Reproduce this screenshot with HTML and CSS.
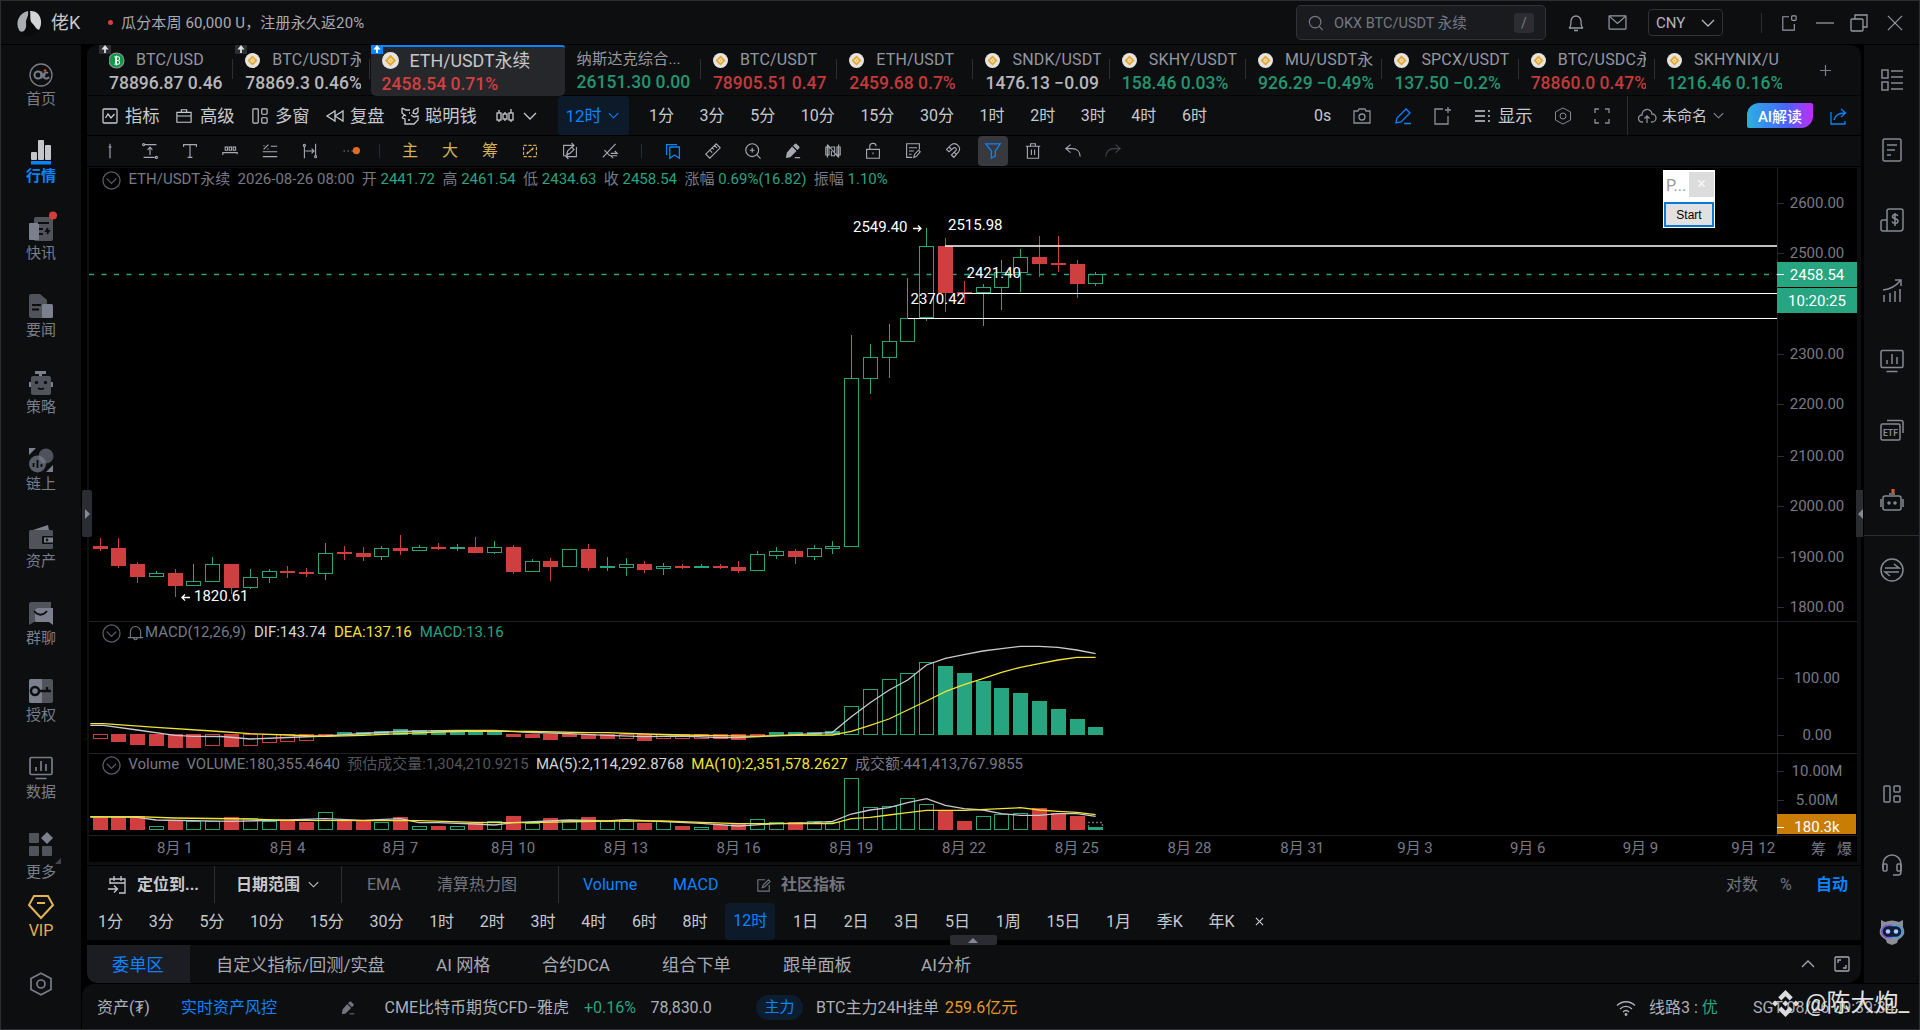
FILE: index.html
```html
<!DOCTYPE html>
<html lang="zh-CN">
<head>
  <meta charset="UTF-8">
  <title>ETH/USDT永续</title>
  <link rel="stylesheet" href="styles.css">
</head>
<body>
  <svg class="sprite" xmlns="http://www.w3.org/2000/svg">
    <symbol id="down" viewBox="0 0 14 8"><path d="M1 1l6 6 6-6"/></symbol>
    <symbol id="fold" viewBox="0 0 20 20"><circle cx="10" cy="10" r="9"/><path d="M5 8l5 5 5-5"/></symbol>
    <symbol id="bell" viewBox="0 0 20 20"><path d="M1 16h18M4 16V9a6 6 0 0 1 12 0v7M8 16.5a2 2 0 0 0 4 0"/></symbol>
    <symbol id="layout" viewBox="0 0 18 18"><rect x="1" y="1" width="6" height="16" rx="1"/><rect x="11" y="1" width="6" height="6" rx="1"/><rect x="11" y="11" width="6" height="6" rx="1"/></symbol>
    <symbol id="pen" viewBox="0 0 18 18"><path d="M2 16l1-5 9-9 4 4-9 9zM10 16.5h7"/></symbol>
    <symbol id="hex" viewBox="0 0 24 24"><path d="M12 1.2l10 5.4v10.8l-10 5.4-10-5.4V6.600z"/><circle cx="12" cy="12" r="4"/></symbol>
    <symbol id="coin" viewBox="0 0 18 18"><circle class="coin-bg" cx="9" cy="9" r="9"/><path class="coin-mark" d="M9 3l6 6-6 6-6-6zM9 6L6 9l3 3 3-3zM9 7.700l1.300 1.300L9 10.300 7.700 9z"/></symbol>
    <symbol id="pin" viewBox="0 0 12 10"><path d="M6 0l4 5H7v4H5V5H2z"/></symbol>
    <symbol id="marker" viewBox="0 0 18 18"><path class="solid" d="M1 17l1-6 6-7 5 5-7 7zM9 3l2-2q1-1 2 0l3 3q1 1 0 2l-2 2z"/><path d="M11 16.500h6"/></symbol>
    <symbol id="monitor" viewBox="0 0 24 24"><rect x="1" y="1.500" width="22" height="17" rx="1.500"/><path d="M7 15v-4M12 15V5M17 15V8M6.500 22.500h11"/></symbol>
  </svg>

  <header class="titlebar">
    <svg class="avatar" viewBox="0 0 26 26"><circle cx="13" cy="13" r="12.500" fill="#0a0a0a"/><path d="M3 20C-1 12 3 3 12 1c1 5-2 8-2 11 0 4 1 5-2 9-2 1-4 1-5-1z" fill="#a9acb0"/><path d="M14 1c10-1 14 11 9 19-3-1-4-4-6-6-4-3-2-8-3-13z" fill="#d2d4d6"/></svg>
    <span class="user">佬K</span>
    <span class="dot"></span>
    <span class="notice">瓜分本周 60,000 U，注册永久返20%</span>
    <div class="search">
      <svg class="i16" viewBox="0 0 18 18"><circle cx="8" cy="8" r="6.500"/><path d="M12.500 12.500l4 4.500"/></svg>
      <span>OKX BTC/USDT 永续</span>
      <kbd>/</kbd>
    </div>
    <svg class="bell" viewBox="0 0 18 18"><path d="M2 14c2-1 2-3 2-7a5 5 0 0 1 10 0c0 4 0 6 2 7zM7 16.500h4"/></svg>
    <svg class="mail" viewBox="0 0 20 16"><rect x="1" y="1" width="18" height="14" rx=".5"/><path d="M1.500 1.500L10 9l8.500-7.500"/></svg>
    <div class="currency">CNY <svg class="chev"><use href="#down"/></svg></div>
    <span class="win-sep"></span>
    <svg class="i16" viewBox="0 0 18 18"><path d="M9 2H2v15h13v-7"/><rect x="12" y="1" width="5" height="5" rx="1"/></svg>
    <svg class="i18" viewBox="0 0 18 18"><path d="M0 9h18"/></svg>
    <svg class="i18" viewBox="0 0 18 18"><rect x="1" y="5" width="12" height="12" rx="1"/><path d="M5 5V1h12v12h-4"/></svg>
    <svg class="i16" viewBox="0 0 18 18"><path d="M1 1l16 16M17 1L1 17"/></svg>
  </header>

  <div class="content">
    <nav class="sidebar">
      <a class="item home"><svg viewBox="0 0 24 24"><circle cx="12" cy="12" r="11"/><circle cx="9" cy="12" r="3.500" stroke-width="2"/><path d="M12.500 8.500v7M20 14a3 3 0 1 1-1-4M15.500 10v3" stroke-width="2"/><circle cx="16" cy="7.500" r="1.300" fill="#e0531f" stroke="none"/></svg>首页</a>
      <a class="item active"><svg viewBox="0 0 24 24"><g stroke="none" fill="#c4c6ca"><rect x="2" y="12" width="6" height="8" rx="1"/><rect x="9" y="0" width="6" height="20" rx="1"/><rect x="16" y="5" width="6" height="15" rx="1"/><rect x="2" y="21" width="20" height="3.500" fill="#0a84ff"/></g></svg>行情</a>
      <a class="item"><svg viewBox="0 0 24 24"><g stroke="none"><rect class="d" x="5" y="0" width="19" height="24" rx="2"/><rect class="l" x="0" y="6" width="10" height="17" rx="1"/></g><path class="k" d="M9 6h11M10 12h4M10 17h4M19 11l-2 3h3l-2 3"/><circle cx="24" cy="-1.500" r="4" fill="#d63c3c" stroke="none"/></svg>快讯</a>
      <a class="item"><svg viewBox="0 0 24 24"><g stroke="none"><path class="d" d="M2 0h9l7 6v18H2a2 2 0 0 1-2-2V2a2 2 0 0 1 2-2z"/><rect class="l" x="13" y="10" width="11" height="14" rx="1.500"/></g><path class="k" d="M3 11h9M3 15.500h7"/></svg>要闻</a>
      <a class="item"><svg viewBox="0 0 24 24"><g stroke="none"><path class="l" d="M6 0h11v3h-4v3h-3V3H6zM0 11h24v5H0z"/><rect class="d" x="2" y="5" width="20" height="19" rx="2"/></g><g fill="#0d0e10" stroke="none"><circle cx="7.500" cy="11.500" r="1.700"/><circle cx="16.500" cy="11.500" r="1.700"/></g><path class="k" d="M9 17c2 1.500 4 1.500 6 0"/></svg>策略</a>
      <a class="item"><svg viewBox="0 0 24 24"><g stroke="none"><circle class="l" cx="17" cy="8" r="7.500" opacity=".6"/><circle class="l" cx="8.500" cy="16" r="8.500" opacity=".7"/><path class="l" d="M0 0h7L0 7zM24 17v7h-7z"/></g><path class="k" d="M4.500 19v-4M8.500 20v-8M12.500 19v-3"/></svg>链上</a>
      <a class="item"><svg viewBox="0 0 24 24"><g stroke="none"><path class="l" d="M4 5l15-5 1 5z"/><rect class="d" x="0" y="5" width="24" height="19" rx="1.500"/><rect x="13" y="11" width="11" height="8" rx="1" fill="#0d0e10"/><rect class="l" x="15" y="12.500" width="9" height="5"/></g><circle class="k" cx="18" cy="15" r=".5"/></svg>资产</a>
      <a class="item"><svg viewBox="0 0 24 24"><g stroke="none"><path class="d" d="M2 0h20v20H5l-5 3V2a2 2 0 0 1 2-2z"/><path class="l" d="M8 6h16v17l-4-3H8a2 2 0 0 1-2-2V8z"/></g><path class="k" d="M5 9c4 5 9 5 13 0"/></svg>群聊</a>
      <a class="item"><svg viewBox="0 0 24 24"><g stroke="none"><rect class="d" width="24" height="24" rx="2"/><path class="l" d="M2 0h11v24H2a2 2 0 0 1-2-2V2a2 2 0 0 1 2-2z"/></g><g stroke="#0d0e10" stroke-width="2.500"><circle cx="6" cy="12" r="4"/><path d="M10 12h12M18 12V8"/></g></svg>授权</a>
      <a class="item"><svg class="thick"><use href="#monitor"/></svg>数据</a>
      <a class="item more"><svg viewBox="0 0 24 24"><g stroke="none" class="d"><rect width="10" height="10" rx="1"/><rect y="13" width="10" height="10" rx="1"/><rect x="13" y="13" width="10" height="10" rx="1"/><path class="l" d="M18 -1l6 6-6 6-6-6z"/></g></svg>更多</a>
      <a class="item vip"><svg viewBox="0 0 26 24"><path d="M6 1h14l5 9-12 13L1 10zM9 8h8" stroke-width="2"/></svg>VIP</a>
      <a class="item gear"><svg class="thick"><use href="#hex"/></svg></a>
    </nav>

    <div class="workspace">
      <div class="upper">
        <main class="main">
          <div class="handle left"></div>
          <div class="tabs">
            <div class="tab gray pinned"><svg class="pin"><use href="#pin"/></svg><div class="name"><svg class="coin" viewBox="0 0 18 18"><circle cx="9" cy="9" r="9" fill="#0c9a45"/><path d="M6.500 4.500h4a2 2 0 0 1 0 4.500 2.200 2.200 0 0 1 0 4.500h-4M8 4.500v9M8 9h3M9 3v12" stroke="#fff"/></svg>BTC/USD</div><div class="quote">78896.87 0.46</div></div>
            <div class="tab gray pinned"><svg class="pin"><use href="#pin"/></svg><div class="name"><svg class="coin"><use href="#coin"/></svg>BTC/USDT永续</div><div class="quote">78869.3 0.46%</div></div>
            <div class="tab red current"><svg class="pin"><use href="#pin"/></svg><div class="name"><svg class="coin"><use href="#coin"/></svg>ETH/USDT永续</div><div class="quote">2458.54 0.71%</div></div>
            <div class="tab green index"><div class="name">纳斯达克综合...</div><div class="quote">26151.30 0.00</div></div>
            <div class="tab red"><div class="name"><svg class="coin"><use href="#coin"/></svg>BTC/USDT</div><div class="quote">78905.51 0.47</div></div>
            <div class="tab red"><div class="name"><svg class="coin"><use href="#coin"/></svg>ETH/USDT</div><div class="quote">2459.68 0.7%</div></div>
            <div class="tab gray"><div class="name"><svg class="coin"><use href="#coin"/></svg>SNDK/USDT</div><div class="quote">1476.13 −0.09</div></div>
            <div class="tab green"><div class="name"><svg class="coin"><use href="#coin"/></svg>SKHY/USDT</div><div class="quote">158.46 0.03%</div></div>
            <div class="tab green"><div class="name"><svg class="coin"><use href="#coin"/></svg>MU/USDT永续</div><div class="quote">926.29 −0.49%</div></div>
            <div class="tab green"><div class="name"><svg class="coin"><use href="#coin"/></svg>SPCX/USDT</div><div class="quote">137.50 −0.2%</div></div>
            <div class="tab red"><div class="name"><svg class="coin"><use href="#coin"/></svg>BTC/USDC永续</div><div class="quote">78860.0 0.47%</div></div>
            <div class="tab green last"><div class="name"><svg class="coin"><use href="#coin"/></svg>SKHYNIX/U</div><div class="quote">1216.46 0.16%</div></div>
            <svg class="add" viewBox="0 0 14 14"><path d="M7 1v12M1 7h12"/></svg>
          </div>

          <div class="toolbar">
            <svg class="i16" viewBox="0 0 16 16"><rect x="1" y="1" width="14" height="14" rx="1"/><path d="M3.500 10l2.500-4 3 4 3.500-4"/></svg><b>指标</b>
            <svg class="i16" viewBox="0 0 18 16"><path d="M1 4h16v11H1zM1 8h16M6 4V1h6v3"/></svg><b>高级</b>
            <svg class="i16"><use href="#layout"/></svg><b>多窗</b>
            <svg class="i18" viewBox="0 0 18 18"><path d="M9 4v10L1 9zM17 4v10L9 9z"/></svg><b>复盘</b>
            <svg class="i18" viewBox="0 0 18 18"><path d="M1 1v5l4 3M1 1l4 2h4M17 1l-4 2-1 3 3 1 2-2zM1 11l3 1v5h9l4-4V9l-4 1-3-2M3 8l-2 3M7 13h2M8 6h1"/></svg><b>聪明钱</b>
            <svg class="i18" viewBox="0 0 18 18"><path d="M3 3v12M9 5v9M15 2v13"/><g fill="#0d0e10"><rect x="1" y="6" width="4" height="7"/><rect x="7" y="7" width="4" height="5"/><rect x="13" y="6" width="4" height="7"/></g></svg>
            <svg class="chev"><use href="#down"/></svg>
            <div class="period-now">12时 <svg><use href="#down"/></svg></div>
            <div class="periods">
              <span>1分</span><span>3分</span><span>5分</span><span>10分</span><span>15分</span><span>30分</span><span>1时</span><span>2时</span><span>3时</span><span>4时</span><span>6时</span>
            </div>
            <span>0s</span>
            <svg class="i18 dim" viewBox="0 0 18 18"><path d="M1 4h4l1-2h6l1 2h4v12H1z"/><circle cx="9" cy="10" r="3"/></svg>
            <svg class="i18 blue"><use href="#pen"/></svg>
            <svg class="i18 dim" viewBox="0 0 18 18"><path d="M9 2H1v15h13V9M14 0v6M11 3h6"/></svg>
            <svg class="i16" viewBox="0 0 16 16"><path d="M0 3h10M0 8h10M0 13h10M13 3h2M13 8h2M13 13h2"/></svg><b>显示</b>
            <svg class="i18 dim"><use href="#hex"/></svg>
            <svg class="i16 dim" viewBox="0 0 16 16"><path d="M1 5V1h4M11 1h4v4M15 11v4h-4M5 15H1v-4"/></svg>
            <span class="vline"></span>
            <svg class="i18 dim" viewBox="0 0 18 16"><path d="M5 14H4a3.500 3.500 0 0 1 0-7 5 5 0 0 1 10-1 4 4 0 0 1 0 8h-1M9 15V8M6.500 10.500L9 8l2.500 2.500"/></svg>
            <span class="draft">未命名</span>
            <svg class="chev small dim"><use href="#down"/></svg>
            <button class="ai-btn">AI解读</button>
            <svg class="i18 blue" viewBox="0 0 18 18"><path d="M2 5v12h14v-3M5 13c1-5 4-7 11-7M12 2l4.500 4L12 10"/></svg>
          </div>

          <div class="tools">
            <i><svg viewBox="0 0 20 20"><path d="M10 1v18M8 5h4"/></svg></i>
            <i><svg viewBox="0 0 20 20"><path d="M3 2h15M2 18h14M10 15V6M7 8.500L10 5l3 3.500"/><circle cx="2" cy="2" r="1.300"/><circle cx="18" cy="18" r="1.300"/></svg></i>
            <i><svg viewBox="0 0 20 20"><path d="M2 5V2h16v3M10 2v16M7 18h6"/></svg></i>
            <i><svg viewBox="0 0 20 20"><path d="M1 15v-3h18v2"/><rect x="4" y="5" width="3" height="4"/><rect x="9" y="5" width="3" height="4"/><rect x="14" y="5" width="3" height="4"/></svg></i>
            <i><svg viewBox="0 0 20 20"><path d="M1 17h18M1 11h18M11 4h8M2 8l6-6M2 3l1 1M7 7l1 1"/></svg></i>
            <i><svg viewBox="0 0 20 20"><path d="M3 4v15M17 1v15M4 10h11M12 7l3 3-3 3"/><circle cx="3" cy="3" r="1.300"/><circle cx="17" cy="17" r="1.300"/></svg></i>
            <i><svg viewBox="0 0 20 20"><path d="M2 10h1.500M7 10h1.500M12 10h1.500"/><circle cx="18" cy="9.500" r="4.500" fill="#e06c1f" stroke="none"/></svg></i>
            <hr>
            <i class="gold">主</i>
            <i class="gold">大</i>
            <i class="gold">筹</i>
            <i class="gold"><svg viewBox="0 0 20 20"><rect x="2" y="3" width="16" height="14" stroke-dasharray="4 2"/><path d="M6 14l8-8M6 14l1-3M14 6l-1 3"/></svg></i>
            <i><svg viewBox="0 0 20 20"><path d="M2 7V3h12M12 0l3 3-3 3M2 7v9h3M18 5v12H6M8 14l-3 3 3 3M6 14l1-4 5-5 3 3-5 5z"/></svg></i>
            <i><svg viewBox="0 0 20 20"><path d="M1 18L17 1M3 9l7 7M11 13h8l-3-3M19 16h-8l3 3"/></svg></i>
            <hr class="wide">
            <i class="blue"><svg viewBox="0 0 20 20"><path d="M6 5h12v14l-6-4-6 4zM2 15V2h13" stroke-width="1.600"/></svg></i>
            <i><svg viewBox="0 0 20 20"><path d="M1 14L14 1l5 5L6 19zM6 9l3 3M9 6l2 2M12 3l3 3"/></svg></i>
            <i><svg viewBox="0 0 20 20"><circle cx="9" cy="9" r="8"/><path d="M14.500 14.500l5 5M9 6v6M6 9h6"/></svg></i>
            <i><svg><use href="#marker"/></svg></i>
            <i><svg viewBox="0 0 20 20"><path d="M3 2v16M17 2v16M1 5h4v10H1zM15 5h4v10h-4zM3 2l14 16M8 10v6h4v-2M8 6V5h4v6"/></svg></i>
            <i><svg viewBox="0 0 20 20"><path d="M2 8h16v11H2zM6 8V5a4 4 0 0 1 8-1M10 12v2"/></svg></i>
            <i><svg viewBox="0 0 20 20"><path d="M18 8V1H2v17h7M5 6h10M5 10h6M5 14h3M11 18l1-4 5-5 2 2-5 6z"/></svg></i>
            <i><svg viewBox="0 0 20 20"><path d="M2 8l6-6a6.500 6.500 0 0 1 9 9l-6 7-3-3 6-6a2.300 2.300 0 0 0-3-3l-6 5zM5 5l3 3M11 11l3 3"/></svg></i>
            <i class="on blue"><svg viewBox="0 0 20 20"><path d="M1 1h18l-6 9v6l-5 3v-9z" stroke-width="1.600"/></svg></i>
            <i><svg viewBox="0 0 20 20"><path d="M1 4h18M3 4v15h14V4M7 4V1h6v3M8 8v7M12 8v7"/></svg></i>
            <i><svg viewBox="0 0 20 20"><path d="M7 2L1 7l6 5M1 7h8c6 0 10 4 10 10"/></svg></i>
            <i class="off"><svg viewBox="0 0 20 20"><path d="M13 2l6 5-6 5M19 7h-8C5 7 1 11 1 17"/></svg></i>
          </div>

          <div class="chart">
            <svg id="chart" viewBox="89 168 1768 694"></svg>
            <div class="legend price">
              <svg class="fold"><use href="#fold"/></svg><span>ETH/USDT永续</span>
              <span>2026-08-26 08:00</span>
              <span>开 <em>2441.72</em></span><span>高 <em>2461.54</em></span><span>低 <em>2434.63</em></span><span>收 <em>2458.54</em></span><span>涨幅 <em>0.69%(16.82)</em></span><span>振幅 <em>1.10%</em></span>
            </div>
            <div class="legend macd">
              <svg class="fold"><use href="#fold"/></svg>
              <span class="with-bell"><svg><use href="#bell"/></svg>MACD(12,26,9)</span>
              <span class="white">DIF:143.74</span><span class="yellow">DEA:137.16</span><em>MACD:13.16</em>
            </div>
            <div class="legend volume">
              <svg class="fold"><use href="#fold"/></svg><span>Volume</span>
              <span>VOLUME:180,355.4640</span><span class="dark">预估成交量:1,304,210.9215</span><span class="white">MA(5):2,114,292.8768</span><span class="yellow">MA(10):2,351,578.2627</span><span>成交额:441,413,767.9855</span>
            </div>
            <div class="popup">
              <div class="popup-head"><span>P...</span><b>×</b></div>
              <button>Start</button>
            </div>
          </div>

          <div class="indicator-bar">
            <svg class="cal" viewBox="0 0 20 20"><path d="M3 9V4h15v14h-6M3 8h15M7 1v5M14 1v5M1 14h9M7 10.500l3.500 3.500L7 17.500"/></svg><b>定位到...</b><span class="vline"></span>
            <b>日期范围</b><svg class="chev small"><use href="#down"/></svg><span class="vline"></span>
            <span class="mute">EMA</span><span class="mute">清算热力图</span><span class="vline"></span>
            <span class="blue">Volume</span><span class="blue">MACD</span>
            <svg class="i14 mute" viewBox="0 0 16 16"><path d="M9 2H1v13h13V8M6 11l1-3 6-6 2 2-6 6z"/></svg><b class="mute">社区指标</b>
            <span class="mute">对数</span><span class="mute">%</span><b class="blue">自动</b>
          </div>
          <div class="period-bar">
            <span>1分</span><span>3分</span><span>5分</span><span>10分</span><span>15分</span><span>30分</span><span>1时</span><span>2时</span><span>3时</span><span>4时</span><span>6时</span><span>8时</span><span class="picked">12时</span><span>1日</span><span>2日</span><span>3日</span><span>5日</span><span>1周</span><span>15日</span><span>1月</span><span>季K</span><span>年K</span>
            <svg viewBox="0 0 10 10"><path d="M1 1l8 8M9 1L1 9"/></svg>
            <div class="handle bottom"></div>
          </div>
          <div class="panel-tabs">
            <span class="picked">委单区</span><span>自定义指标/回测/实盘</span><span>AI 网格</span><span>合约DCA</span><span>组合下单</span><span>跟单面板</span><span>AI分析</span>
            <svg class="chev up"><use href="#down"/></svg>
            <svg class="i16" viewBox="0 0 16 16"><rect x="1" y="1" width="14" height="14" rx="1"/><path d="M4 7V4h3M12 9v3H9"/></svg>
          </div>
          <div class="handle right"></div>
        </main>

        <aside class="rail">
          <svg viewBox="0 0 24 24"><rect x="2" y="2" width="6" height="8"/><rect x="2" y="14" width="6" height="8"/><path d="M11 3h12M11 9h12M11 15h12M11 21h12"/></svg>
          <svg viewBox="0 0 24 24"><rect x="3" y="1" width="18" height="22" rx="1.500"/><path d="M7 7h10M7 12h8M7 17h4"/></svg>
          <svg viewBox="0 0 24 24"><path d="M3 23h17a3 3 0 0 0 3-3V3a2 2 0 0 0-2-2H9a2 2 0 0 0-2 2v20H3a2 2 0 0 1-2-2v-7a2 2 0 0 1 2-2h4"/><path d="M18 8c-1-2-5-2-5.500 0-.5 3.500 5.500 2 5.500 5 0 3-5 3-6 .500M15 5v13"/></svg>
          <svg viewBox="0 0 24 24"><path d="M3 11c8-1 13-4 17-9M15 1h6v6M4 16v7M10 14v9M15 12v11M20 10v13"/></svg>
          <svg><use href="#monitor"/></svg>
          <svg viewBox="0 0 24 24"><rect x="1" y="5" width="19" height="16" rx="1.500"/><path d="M7 1.500h14a2 2 0 0 1 2 2V14"/><text x="3" y="16.500">ETF</text></svg>
          <svg viewBox="0 0 24 24"><rect x="3" y="7" width="18" height="14" rx="2"/><path d="M1 10v8M23 10v8M9 5h6"/><g fill="currentColor"><circle cx="9" cy="14" r="1"/><circle cx="15" cy="14" r="1"/></g><path d="M13 0v4" stroke="#e05a2a" stroke-width="3"/></svg>
          <hr>
          <svg class="swap" viewBox="0 0 24 24"><circle cx="12" cy="12" r="11"/><path d="M5 10h14l-5-4M19 14H5l5 4"/></svg>
          <svg class="grid-icon"><use href="#layout"/></svg>
          <svg class="phone" viewBox="0 0 24 24"><path d="M3 16V11a9 9 0 0 1 18 0v8a3 3 0 0 1-3 3h-5"/><rect x="3" y="11" width="4" height="7" rx="1"/><rect x="17" y="11" width="4" height="7" rx="1"/></svg>
          <svg class="bot" viewBox="0 0 26 26" stroke="none"><path d="M2 1l4 2q7-3 14 0l4-2v7q3 6-1 10l-4 3-1 3-5 2-5-2-1-3-4-3q-4-4-1-10z" fill="#8d8f97"/><rect x="2.500" y="6" width="21" height="13" rx="6.500" fill="#151b36"/><path d="M13 6.500H9a6 6 0 0 0 0 12h4" stroke="#7a55e0" stroke-width="1.500"/><path d="M13 6.500h4a6 6 0 0 1 0 12h-4" stroke="#4da3e8" stroke-width="1.500"/><circle cx="9" cy="12.500" r="2.300" fill="#9fd0ff"/><circle cx="17" cy="12.500" r="2.300" fill="#9fd0ff"/></svg>
        </aside>
      </div>

      <footer class="status">
        <span>资产(₮)</span>
        <span class="blue">实时资产风控</span>
        <svg class="i14 mute"><use href="#marker"/></svg>
        <span>CME比特币期货CFD−雅虎</span>
        <span class="green">+0.16%</span>
        <span>78,830.0</span>
        <span class="pill">主力</span>
        <span>BTC主力24H挂单</span>
        <span class="orange">259.6亿元</span>
        <svg class="wifi" viewBox="0 0 20 16"><path d="M1 5.500c5-5 13-5 18 0M4 9c3.500-3.500 8.500-3.500 12 0M7 12c2-2 4-2 6 0"/><circle cx="10" cy="14.500" r=".8"/></svg>
        <span>线路3 : <em>优</em></span>
        <span class="clock">SGT 08/26 09:39:34</span>
        <div class="watermark">
          <svg viewBox="0 0 26 26"><path d="M13 0l7 7-3 3-4-4-4 4-3-3zM3 10l3 3-3 3-3-3zM23 10l3 3-3 3-3-3zM13 10l3 3-3 3-3-3zM6 19l3-3 4 4 4-4 3 3-7 7z"/></svg>
          @陈大炮_
        </div>
      </footer>
    </div>
  </div>
  <script src="chart.js"></script>
</body>
</html>
```
FILE: styles.css
```css
* {
  box-sizing: border-box;
}

body {
  margin: 0;
  width: 1920px;
  height: 1030px;
  overflow: hidden;
  border: 1px solid #2b2d31;
  background: #000;
  color: #c6c9ce;
  font-family: Roboto, "Noto Sans CJK SC", sans-serif;
  font-size: 16px;
  line-height: 20px;
  white-space: nowrap;
}

svg {
  display: block;
  fill: none;
  stroke: currentColor;
  stroke-width: 1.3;
  overflow: visible;
}

.sprite {
  position: absolute;
  width: 0;
  height: 0;
}

b {
  font-weight: 500;
}

em {
  font-style: normal;
  color: #27a581;
}

.i14 { width: 14px; height: 14px; }
.i16 { width: 16px; height: 16px; }
.i18 { width: 18px; height: 18px; }
.chev { width: 14px; height: 8px; }
.chev.small { width: 11px; height: 7px; }
.solid { fill: currentColor; stroke: none; }
.blue { color: #0a84ff; }
.green { color: #27a581; }
.orange { color: #e79a24; }
.mute { color: #72757f; }
.dim { color: #8b8e98; }

.coin-bg { fill: #e6e4e2; stroke: none; }
.coin-mark { fill: #e9a825; stroke: none; fill-rule: evenodd; }

.vline {
  align-self: stretch;
  width: 1px;
  background: #2c2e33;
}

/* title bar */
.titlebar {
  height: 44px;
  border-bottom: 1px solid #000;
  background: #0d0e10;
  display: grid;
  grid-template-columns: 35px 57px 13px 1175px 271px 41px 40px 113px 20px 35px 34px 37px 20px;
  padding-left: 15px;
  align-items: center;
  color: #9699a3;
}

.avatar { width: 26px; height: 26px; stroke: none; }
.user { font-size: 18px; color: #c6c9ce; }

.dot {
  width: 5px;
  height: 5px;
  border-radius: 50%;
  background: #d84040;
}

.notice { font-size: 15px; color: #a8abb3; letter-spacing: 0.15px; }

.search {
  width: 250px;
  height: 35px;
  border: 1px solid #303237;
  border-radius: 5px;
  background: #1a1b1f;
  display: grid;
  grid-template-columns: 26px 180px 20px;
  align-items: center;
  padding-left: 11px;
  font-size: 14.5px;
  color: #757883;
}

.search span { padding-top: 3px; }

kbd {
  height: 20px;
  border-radius: 3px;
  background: #2c2d32;
  text-align: center;
  font-family: inherit;
  font-size: 14px;
}

.bell { width: 18px; height: 18px; }
.mail { width: 19px; height: 15px; }

.currency {
  width: 75px;
  height: 27px;
  border: 1px solid #303237;
  border-radius: 4px;
  display: flex;
  align-items: center;
  justify-content: space-between;
  padding: 0 7px;
  font-size: 15px;
  color: #b4b7bd;
}

.win-sep { width: 1px; height: 20px; background: #2c2e33; }

.content {
  display: flex;
}

/* left navigation */
.sidebar {
  width: 80px;
  height: 984px;
  background: #0d0e10;
  padding-top: 18px;
}

.item {
  height: 77px;
  display: flex;
  flex-direction: column;
  align-items: center;
  font-size: 15px;
  color: #7a7d88;
  position: relative;
}

.item svg {
  width: 24px;
  height: 24px;
  margin-bottom: 2px;
}

.item .d { fill: #50535a; }
.item .l { fill: #7b7f8e; }
.item .k { stroke: #0d0e10; stroke-width: 1.8; }
.item.active { color: #0a84ff; font-weight: 700; }
.item.home { color: #7a7d88; }
.thick { stroke-width: 1.7; }
.more { height: 62px; }
.more svg { margin-bottom: 5px; }

.more::after {
  content: "";
  position: absolute;
  right: 20px;
  top: 25px;
  border: 3px solid #44464c;
  border-top-color: transparent;
  border-left-color: transparent;
}

.vip { color: #e8b04c; font-size: 16px; }
.vip svg { width: 26px; color: #e5b553; }

/* centre column */
.workspace { width: 1838px; }
.upper { display: flex; height: 938px; }

.main {
  width: 1774px;
  margin-left: 6px;
  background: #0d0e10;
  border-radius: 10px 10px 14px 14px;
  position: relative;
}

.handle {
  position: absolute;
  background: #2b2c31;
  z-index: 2;
}

.handle::after {
  content: "";
  position: absolute;
  border: 5px solid transparent;
}

.handle.left { left: -5px; top: 445px; width: 10px; height: 47px; border-radius: 2px; }
.handle.left::after { left: 3px; top: 19px; border-left-color: #858995; border-right: 0; }
.handle.right { right: -2px; top: 445px; width: 7px; height: 47px; }
.handle.right::after { right: 0; top: 19px; border-right-color: #858995; border-left: 0; }
.handle.bottom { left: 863px; top: 32px; width: 47px; height: 10px; border-radius: 2px; }
.handle.bottom::after { left: 18px; top: 3px; border-bottom-color: #858995; border-top: 0; }

.tabs {
  height: 51px;
  border-bottom: 1px solid #050506;
  display: flex;
  padding-left: 10px;
}

.tab {
  width: 136.3px;
  height: 50px;
  padding: 5px 9px 0 12px;
  position: relative;
}

.tab::after {
  content: "";
  position: absolute;
  right: 0;
  top: 14px;
  width: 1px;
  height: 20px;
  background: #2c2e33;
}

.tab.last::after,
.tab.current::after { display: none; }

.name {
  display: flex;
  align-items: center;
  font-size: 16px;
  letter-spacing: 0.2px;
  height: 20px;
  color: #9497a1;
  overflow: hidden;
}

.quote {
  font-size: 17.5px;
  height: 24px;
  line-height: 26px;
  font-weight: 500;
  overflow: hidden;
}

.coin { width: 15px; height: 15px; margin-right: 12px; flex: none; }
.gray .quote { color: #b6b7ba; }
.red .quote { color: #c23a3a; }
.green .quote { color: #239570; }

.pin {
  position: absolute;
  left: 2px;
  top: 0;
  width: 12px;
  height: 9px;
  background: #2c2d31;
  fill: #ddd;
  stroke: none;
}

.tab.current {
  width: 194px;
  height: 51px;
  margin: 0 0 0 1px;
  padding-left: 11px;
  border-top: 2px solid #0a84ff;
  border-radius: 3px 3px 5px 5px;
  background: #26272b;
  padding-top: 3px;
}

.current .name { font-size: 17.8px; color: #c6c8cc; letter-spacing: 0; height: 21px; }
.current .quote { color: #d23f3f; line-height: 27px; }
.current .coin { width: 17px; height: 17px; margin-right: 11px; }
.current .pin { left: 0; top: -2px; background: #0a84ff; fill: #fff; }
.tab.index .name { font-size: 15.3px; height: 17px; letter-spacing: 0; }
.tab.index .quote { height: 28px; line-height: 30px; }
.add { width: 13px; height: 13px; margin: 19px 0 0 28px; color: #7b7e88; }

.toolbar {
  height: 40px;
  border-bottom: 1px solid #000;
  display: grid;
  grid-template-columns: 23px 51px 24px 52px 23px 51px 24px 51px 24px 71px 27px 34.5px 91.5px 665px 39px 41px 40px 41px 23px 56px 40px 33px 11px 24px 51px 34px 82px 18px;
  padding-left: 15px;
  align-items: center;
}

.toolbar b { font-size: 17.3px; font-weight: 400; }

.period-now {
  width: 71px;
  height: 39px;
  border-radius: 4px;
  background: #0c1a29;
  color: #0a84ff;
  display: flex;
  align-items: center;
  padding-left: 8px;
  gap: 6px;
  font-size: 17px;
}

.period-now svg { width: 11px; height: 7px; }

.periods {
  display: flex;
  gap: 25.6px;
}

.draft { font-size: 15px; }

.ai-btn {
  width: 66px;
  height: 25px;
  padding: 0;
  border: 0;
  border-radius: 12px 2px 12px 2px;
  background: linear-gradient(90deg, #2bb0df, #4a63ff 60%, #c02df5);
  color: #fff;
  font: 500 15px Roboto, "Noto Sans CJK SC", sans-serif;
}

.tools {
  height: 31px;
  border-bottom: 1px solid #000;
  display: flex;
  padding-left: 3px;
  color: #a6a9b2;
}

.tools i {
  width: 40px;
  height: 30px;
  display: flex;
  align-items: center;
  justify-content: center;
  font-style: normal;
  line-height: 30px;
}

.tools svg { width: 16px; height: 16px; stroke-width: 1.4; }

.tools hr {
  width: 1px;
  height: 14px;
  border: 0;
  margin: 8px 10px 0 9px;
  background: #252a38;
}

.tools hr.wide { margin: 8px 11px; }
.tools .gold { color: #d8b052; }
.tools .blue { color: #0a84ff; }
.tools .off { color: #44464d; }

.tools .on {
  width: 30px;
  margin: 0 5px;
  border-radius: 4px;
  background: #38393e;
}

/* chart */
.chart {
  margin: 1px 4px 0 2px;
  height: 694px;
  background: #000;
  position: relative;
}

#chart { width: 1768px; height: 694px; stroke: none; }
#chart text { font-size: 15px; fill: #777a85; }
#chart .mark { fill: #fff; }

.legend {
  position: absolute;
  left: 13px;
  display: flex;
  align-items: center;
  gap: 7.4px;
  font-size: 15px;
  color: #777a85;
}

.legend.price { top: 0; }
.legend.macd { top: 453px; }
.legend.volume { top: 585px; gap: 7.3px; }
.fold { width: 19px; height: 19px; margin-top: 3px; color: #5c5f68; }
.legend.macd { gap: 8px; }
.with-bell { display: flex; align-items: center; margin-left: -2px; }
.with-bell svg { width: 17px; height: 17px; margin-right: 1px; }
.legend .white { color: #d4d5d8; }
.legend .yellow { color: #f2e430; }
.legend .dark { color: #53555c; }

.popup {
  position: absolute;
  left: 1574px;
  top: 2px;
  width: 52px;
  height: 58px;
  background: #fff;
  padding: 2px 1px 1px;
}

.popup-head {
  display: flex;
  justify-content: space-between;
  height: 30px;
  padding-left: 2px;
  line-height: 27px;
  color: #999;
}

.popup b {
  width: 25px;
  height: 25px;
  line-height: 24px;
  text-align: center;
  background: #dcdcdc;
  color: #f5f5f5;
}

.popup button {
  width: 50px;
  height: 25px;
  padding: 0;
  border: 2px solid #0a78d6;
  background: #e1e1e1;
  color: #000;
  font: 12px "Liberation Sans", sans-serif;
}

/* rows under the chart */
.indicator-bar {
  height: 38px;
  margin-top: 3px;
  border-top: 1px solid #000;
  display: grid;
  grid-template-columns: 30px 77px 22px 72px 33px 26px 70px 121px 25px 90px 84px 24px 945px 54px 36px 32px;
  padding-left: 20px;
  align-items: center;
}

.indicator-bar b { font-weight: 700; padding-top: 1px; }
.indicator-bar .blue,
.indicator-bar span.mute { padding-top: 1px; }
.cal { width: 20px; height: 20px; }

.period-bar {
  height: 37px;
  display: flex;
  align-items: center;
  gap: 25.7px;
  padding-left: 11px;
  position: relative;
}

.period-bar .picked {
  height: 37px;
  line-height: 36px;
  padding: 0 8px;
  margin: 0 -8px;
  border-radius: 4px;
  background: #0c1a29;
  color: #0a84ff;
}

.period-bar > svg { width: 9px; height: 9px; margin-left: -5px; }

.panel-tabs {
  height: 43px;
  border-top: 5px solid #000;
  display: grid;
  grid-template-columns: 129px 220px 106px 120px 121px 138px 880px 33px 16px;
  align-items: center;
  font-size: 17.2px;
  color: #a6a9b2;
}

.panel-tabs > span { padding-top: 2px; }

.panel-tabs .picked {
  width: 103px;
  height: 38px;
  line-height: 38px;
  padding: 1px 0 0 25px;
  background: #1c1d22;
  border-bottom-left-radius: 10px;
  color: #0a84ff;
}

.chev.up { transform: rotate(180deg); }

/* right icon rail */
.rail {
  width: 55px;
  margin-left: 3px;
  background: #0d0e10;
  color: #868994;
  display: flex;
  flex-direction: column;
  align-items: center;
  padding-top: 23px;
}

.rail svg {
  width: 24px;
  height: 24px;
  margin-bottom: 46.2px;
  stroke-width: 1.5;
}

.rail text {
  font: 700 8.5px Roboto, sans-serif;
  fill: currentColor;
  stroke: none;
}

.rail hr {
  width: 55px;
  height: 1px;
  flex: none;
  border: 0;
  margin: -24px 0 22px;
  background: #2c2e33;
}

.rail .swap { margin-bottom: 203px; }
.rail .grid-icon { width: 18px; height: 18px; margin-bottom: 50px; }
.rail .phone { margin-bottom: 42px; }
.rail .bot { width: 26px; height: 26px; stroke: none; }

/* status bar */
.status {
  height: 46px;
  margin: 1px 0 0 1px;
  border-top-left-radius: 12px;
  background: #0d0e10;
  display: grid;
  grid-template-columns: 84px 160px 43.5px 199.5px 66.5px 105.5px 60px 129px 671px 33px 104px 160px;
  padding: 1px 0 0 15px;
  align-items: center;
  color: #adb0b8;
  position: relative;
}

.pill {
  width: 47px;
  height: 25px;
  line-height: 25px;
  text-align: center;
  border-radius: 13px;
  background: #0c1d30;
  color: #0a84ff;
  font-size: 15px;
}

.wifi { width: 20px; height: 16px; }

.watermark {
  position: absolute;
  left: 1690px;
  top: 4px;
  display: flex;
  gap: 6px;
  align-items: center;
  font-size: 24px;
  line-height: 30px;
  color: #e2e2e2;
}

.watermark svg { width: 27px; height: 27px; fill: #dcdcdc; stroke: none; }
```
FILE: chart.js
```js
const NS = 'http://www.w3.org/2000/svg';
const svg = document.getElementById('chart');
const GREEN = '#27a581';
const RED = '#cf3f3f';
const WHITE = '#c9cacd';
const YELLOW = '#f2e430';
const RIGHT = 1777;

// direction, high, body top, body bottom, low
const candles = [
  ['r',538,546,549,551],['r',538,548,566,568],['r',562,564,577,583],['g',571,573,577,577],
  ['r',569,573,586,597],['g',564,581,586,586],['g',557,564,582,582],['r',564,564,588,594],
  ['g',569,577,588,589],['g',569,571,578,583],['r',566,571,573,578],['r',568,572,574,577],
  ['g',543,553,574,580],['r',546,552,554,560],['r',547,553,557,561],['g',546,548,557,560],
  ['r',535,548,551,555],['g',545,547,551,551],['r',543,547,549,550],['g',544,547,549,551],
  ['r',537,547,553,553],['g',541,547,553,554],['r',545,547,572,574],['g',559,561,572,572],
  ['r',558,561,567,581],['g',549,549,567,567],['r',544,549,568,571],['g',557,566,568,571],
  ['g',558,564,568,576],['r',561,564,570,573],['g',563,566,569,575],['r',564,566,568,569],
  ['g',564,566,568,568],['r',564,566,568,569],['r',561,567,571,573],['g',551,554,571,571],
  ['g',547,551,556,559],['r',549,551,557,564],['g',545,548,557,560],['g',541,546,549,554],
  ['g',335,378,547,547],['g',344,357,379,394],['g',324,341,358,378],['g',278,318,342,342],
  ['g',228,246,318,321],['r',238,246,293,312],['r',281,292,294,303],['g',284,287,293,326],
  ['g',260,272,288,310],['g',249,257,273,292],['r',236,257,264,277],['r',236,263,265,272],
  ['r',260,264,284,298],['g',272,274,284,286]
];

// end of each MACD bar, h = hollow
const macd = [
  [739,'h'],[742],[745],[746],[748],[748],[746,'h'],[747],[746,'h'],[743,'h'],[742,'h'],[741,'h'],[736],
  [732],[732],[731],[729],[730],[730],[730],[730],[731],
  [737],[738],[740],[737],[739],[739],[739,'h'],[741],[739,'h'],[739,'h'],[739,'h'],[739],[740],[736],
  [732],[732],[732],[731],[706,'h'],[689,'h'],[679,'h'],[673,'h'],[662,'h'],
  [666],[673],[681],[688],[693],[701],[709],[719],[727]
];

const volume = [
  817,817,816,826,821,821,821,817,818,821,821,822,812,820,820,822,817,826,826,826,823,821,816,823,818,821,817,
  821,821,823,821,826,827,825,823,819,822,822,821,822,778,807,806,798,804,810,821,816,814,813,808,813,816,827
];

const dif = [[-.5,725.3],[.2,725.3],[2,730],[4,735.3],[5,736.3],[6.5,736.5],[8,739],[10,737.5],[12,736],[14,733.5],[16,731.5],[19,730.3],[21,730.3],[23,732.5],[25,733.7],[27,735.3],[29,736.7],[31,736],[33,737.7],[34,737.7],[36,735.7],[38,733.7],[39,732.3],[40,716.7],[41,702.7],[42,690.3],[43,680],[44,665],[45,658.3],[46,654.7],[47,651],[48,648.7],[49,646.3],[50,646.3],[51,647.3],[52,650],[53,653.7]];
const dea = [[-.5,723.7],[.2,723.7],[3,727.3],[6,731],[8,733.7],[10,735],[12,736.3],[14,735.3],[16,733.7],[18,732],[20,731],[23,731.5],[26,732.7],[27,732.7],[29,734],[31,735],[33,735.7],[35,736.3],[37,735.3],[39,735],[40,731.3],[41,725.3],[42,719],[43,710],[44,701],[45,691.7],[46,684.7],[47,678.7],[48,672.3],[49,667.3],[50,663.7],[51,660],[52,657.3],[53,657.3]];
const ma5 = [[-.5,816.7],[2,817.3],[3,820],[7,821.3],[10,820],[12,818.7],[14,820.3],[16,818.7],[17,822.7],[18,822.7],[20,824],[21,825],[22,822.7],[25,820],[27,821],[28,819.7],[30,821.7],[32,823.3],[34,826],[36,823.7],[38,822.7],[39,821.3],[40,814],[41,810],[42,807.7],[43,802.7],[44,798.7],[45,805.3],[46,808.7],[47,810],[48,813.7],[49,815.3],[50,815.3],[51,813.7],[52,813.7],[53,816.3]];
const ma10 = [[-.5,817],[2,816.7],[4,818],[8,819],[10,820.3],[17,820.7],[20,822.3],[23,822.7],[27,821],[30,821],[32,822.3],[34,823.7],[39,823.7],[40,818.7],[41,817.3],[42,815],[43,812.7],[44,810.3],[46,810.3],[48,808.7],[49,807.7],[50,810],[51,811.3],[52,812.3],[53,814.7]];

function xAt(i) {
  return 99.7 + i * 18.79;
}

function add(tag, attrs, text) {
  const el = document.createElementNS(NS, tag);
  for (const key in attrs) el.setAttribute(key, attrs[key]);
  if (text) el.textContent = text;
  svg.appendChild(el);
}

function line(x1, y1, x2, y2, stroke, extra) {
  add('line', Object.assign({ x1, y1, x2, y2, stroke, 'stroke-width': 1 }, extra));
}

function bar(i, top, bottom, color, hollow) {
  const x = Math.round(xAt(i) - 7.2);
  if (hollow && bottom - top > 1) {
    add('rect', { x: x + .5, y: top + .5, width: 14, height: bottom - top - 1, fill: '#000', stroke: color, 'stroke-width': 1 });
  } else {
    add('rect', { x, y: top, width: 15, height: bottom - top, fill: color });
  }
}

function curve(points, color) {
  const pts = points.map(p => xAt(p[0]).toFixed(1) + ',' + p[1]).join(' ');
  add('polyline', { points: pts, fill: 'none', stroke: color, 'stroke-width': 1.3 });
}

function label(x, y, text, cls, anchor) {
  add('text', { x, y, class: cls || '', 'text-anchor': anchor || 'start' }, text);
}

// pane borders
[621.5, 753.5, 835.5].forEach(y => line(89, y, 1857, y, '#1f2023'));
line(RIGHT + .5, 168, RIGHT + .5, 835, '#1f2023');

// price axis
[[203,'2600.00'],[253,'2500.00'],[354,'2300.00'],[404,'2200.00'],[456,'2100.00'],[506,'2000.00'],[557,'1900.00'],[607,'1800.00'],
 [678,'100.00'],[735,'0.00'],[771,'10.00M'],[800,'5.00M']].forEach(t => {
  line(RIGHT, t[0] + .5, RIGHT + 7, t[0] + .5, '#2c2e33');
  label(1817, t[0] + 5, t[1], '', 'middle');
});

// date axis
['8月 1','8月 4','8月 7','8月 10','8月 13','8月 16','8月 19','8月 22','8月 25','8月 28','8月 31','9月 3','9月 6','9月 9','9月 12'].forEach((d, n) => {
  label(xAt(4 + n * 6), 853, d, '', 'middle');
});
label(1811, 854, '筹');
label(1837, 854, '爆');

line(89, 274.5, RIGHT, 274.5, GREEN, { 'stroke-dasharray': '5 7.5', 'stroke-width': 1.3 });

candles.forEach((c, i) => {
  const color = c[0] === 'g' ? GREEN : RED;
  const x = Math.round(xAt(i) - .2) + .5;
  line(x, c[1], x, c[2], color);
  line(x, c[3], x, c[4], color);
  if (c[0] === 'r') bar(i, c[2], c[3], color);
  else {
    const left = Math.round(xAt(i) - 7.2) + .5;
    add('rect', { x: left, y: c[2] + .5, width: 14, height: c[3] - c[2] - 1, fill: 'none', stroke: color, 'stroke-width': 1 });
  }
});

line(945, 246, RIGHT, 246, '#fff', { 'stroke-width': 1.4 });
line(964, 293.5, RIGHT, 293.5, '#fff', { 'stroke-width': 1.2 });
line(908, 318.5, RIGHT, 318.5, '#fff', { 'stroke-width': 1.2 });

label(853, 232, '2549.40', 'mark');
label(948, 230, '2515.98', 'mark');
label(966.5, 278, '2421.40', 'mark');
label(910.5, 304, '2370.42', 'mark');
label(194, 601, '1820.61', 'mark');
add('path', { d: 'M913 228.500h8M918 225.500l3 3-3 3', fill: 'none', stroke: '#fff', 'stroke-width': 1.3 });
add('path', { d: 'M190 597.500h-8M185 594.500l-3 3 3 3', fill: 'none', stroke: '#fff', 'stroke-width': 1.3 });

macd.forEach((m, i) => {
  if (m[0] < 734) bar(i, m[0], 735, GREEN, m[1]);
  else bar(i, 734, m[0], RED, m[1]);
});
curve(dif, WHITE);
curve(dea, YELLOW);

volume.forEach((top, i) => {
  const up = candles[i][0] === 'g';
  bar(i, top, 830, up ? GREEN : RED, up && i < 53);
});
add('path', { d: 'M1088.500 827v-4.500h14V827', fill: 'none', stroke: '#6b6e76', 'stroke-dasharray': '2 2' });
curve(ma5, WHITE);
curve(ma10, YELLOW);

// current price, countdown and volume tags
add('rect', { x: 1777, y: 262, width: 80, height: 25, fill: GREEN });
add('rect', { x: 1777, y: 288, width: 80, height: 25, fill: GREEN });
add('rect', { x: 1777, y: 814, width: 79, height: 20, fill: '#c97d05' });
line(1777, 274.5, 1784, 274.5, '#fff');
line(1777, 827.5, 1784, 827.5, '#fff');
label(1817, 279.5, '2458.54', 'mark', 'middle');
label(1817, 305.5, '10:20:25', 'mark', 'middle');
label(1817, 832, '180.3k', 'mark', 'middle');
```
